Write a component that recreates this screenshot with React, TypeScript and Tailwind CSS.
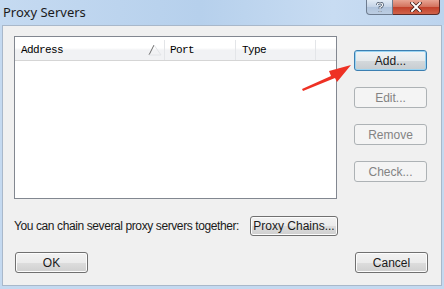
import React from "react";

const uiFont = { fontFamily: "'Liberation Sans', Arial, sans-serif" };

function WinButton({
  label,
  className = "",
  disabled = false,
  isDefault = false,
}: {
  label: string;
  className?: string;
  disabled?: boolean;
  isDefault?: boolean;
}) {
  if (disabled) {
    return (
      <div
        className={`flex items-center justify-center whitespace-nowrap rounded-[3px] border border-[#adb2b5] bg-[#f4f4f4] text-[12px] text-[#838383] ${className}`}
      >
        {label}
      </div>
    );
  }
  return (
    <div
      className={`flex items-center justify-center whitespace-nowrap rounded-[3px] border text-[12px] text-[#1a1a1a] ${
        isDefault
          ? "border-[#3c7fb1] bg-[linear-gradient(#f0f4f6_0%,#e6eaec_50%,#d4d9dc_51%,#c6ccd0_100%)] shadow-[inset_0_0_0_1px_#9ad4f2]"
          : "border-[#707070] bg-[linear-gradient(#f2f2f2_0%,#ebebeb_50%,#dddddd_51%,#cfcfcf_100%)] shadow-[inset_0_0_0_1px_#fcfcfc]"
      } ${className}`}
    >
      {label}
    </div>
  );
}

export default function App() {
  return (
    <div
      className="relative flex h-[289px] w-[444px] flex-col overflow-hidden bg-[#c4d9f0]"
      style={uiFont}
    >
      {/* title bar */}
      <div className="relative h-[25px] shrink-0 bg-[linear-gradient(90deg,#c5daf1_0%,#b6d0ec_45%,#c8dcf2_75%,#bcd4ee_100%)]">
        <span
          className="absolute left-[3px] top-[3px] text-[13px] leading-[18px] text-[#1b1b1b]"
          style={{ fontFamily: "'Noto Sans', sans-serif" }}
        >
          Proxy Servers
        </span>
        <div className="absolute right-[4px] top-0 flex h-[15px]">
          <div className="flex w-[27px] items-center justify-center rounded-bl-[4px] border border-t-0 border-[#6d7c8f] bg-[linear-gradient(#e2ebf5,#c3d3e6_50%,#b0c4dc_51%,#bccde2)]">
            <svg width="8" height="11" viewBox="0 0 8 11">
              <path
                d="M1.5 3 Q1.5 1 4 1 Q6.5 1 6.5 3 Q6.5 4.5 4 5.5 L4 7 M4 9 L4 10"
                stroke="#3a4a5e"
                strokeWidth="2.6"
                fill="none"
              />
              <path
                d="M1.5 3 Q1.5 1 4 1 Q6.5 1 6.5 3 Q6.5 4.5 4 5.5 L4 7 M4 9 L4 10"
                stroke="#ffffff"
                strokeWidth="1.2"
                fill="none"
              />
            </svg>
          </div>
          <div className="flex w-[47px] items-center justify-center rounded-br-[4px] border border-l-0 border-t-0 border-[#5b2d2a] bg-[linear-gradient(#e8a493,#d2715c_50%,#c2402a_51%,#d0634a)]">
            <svg width="12" height="10" viewBox="0 0 12 10">
              <path
                d="M2 1 L10 9 M10 1 L2 9"
                stroke="#3b1a16"
                strokeWidth="3.4"
                strokeLinecap="square"
              />
              <path
                d="M2 1 L10 9 M10 1 L2 9"
                stroke="#ffffff"
                strokeWidth="2"
                strokeLinecap="square"
              />
            </svg>
          </div>
        </div>
      </div>

      {/* client area */}
      <div className="mx-[2px] mb-[3px] flex flex-1 flex-col border border-[#a9b8ca] bg-[#f0f0f0] pl-[11px] pt-[10px]">
        <div className="flex">
          {/* list view */}
          <div className="flex h-[163px] w-[323px] flex-col border border-[#828790] bg-white">
            <div
              className="mt-[1px] flex h-[23px] border-b border-[#d5d5d5] bg-[linear-gradient(#ffffff_0%,#ffffff_45%,#f1f2f4_55%,#f1f2f4_100%)] pt-[2px] text-[11px] tracking-[-0.6px] text-black"
              style={{ fontFamily: "'Liberation Mono', 'DejaVu Sans Mono', monospace" }}
            >
              <div className="relative flex w-[150px] items-center border-r border-[#e3e5e8] pl-[6px]">
                Address
                <svg
                  className="absolute left-[133px] top-[4px]"
                  width="14"
                  height="12"
                  viewBox="0 0 14 12"
                >
                  <path d="M1 11 L6 1" stroke="#6b6b6b" strokeWidth="1" fill="none" />
                  <path d="M6 1 L13 11 L1 11" stroke="#e2e4e7" strokeWidth="1" fill="none" />
                </svg>
              </div>
              <div className="flex w-[71px] items-center border-r border-[#e3e5e8] pl-[5px]">
                Port
              </div>
              <div className="flex w-[80px] items-center border-r border-[#e3e5e8] pl-[6px]">
                Type
              </div>
              <div className="flex-1" />
            </div>
          </div>

          {/* buttons */}
          <div className="ml-[17px] flex flex-col gap-[16px] pt-[14px]">
            <WinButton label="Add..." isDefault className="h-[21px] w-[73px]" />
            <WinButton label="Edit..." disabled className="h-[21px] w-[73px]" />
            <WinButton label="Remove" disabled className="h-[21px] w-[73px]" />
            <WinButton label="Check..." disabled className="h-[21px] w-[73px]" />
          </div>
        </div>

        <div className="mt-[17px] flex items-center">
          <span className="w-[236px] whitespace-nowrap text-[12px] tracking-[-0.4px] text-[#1a1a1a]">
            You can chain several proxy servers together:
          </span>
          <WinButton label="Proxy Chains..." className="h-[20px] w-[88px]" />
        </div>

        <div className="mt-[16px] flex">
          <WinButton label="OK" className="ml-[1px] h-[21px] w-[73px]" />
          <WinButton label="Cancel" className="ml-[267px] h-[21px] w-[73px]" />
        </div>
      </div>

      {/* annotation arrow */}
      <svg
        className="pointer-events-none absolute left-0 top-0"
        width="444"
        height="289"
        viewBox="0 0 444 289"
      >
        <path
          d="M302 89 L331 76 L329 71 L351 65 L337 82 L335 78 L303 91 Z"
          fill="#ee3124"
        />
      </svg>
    </div>
  );
}
